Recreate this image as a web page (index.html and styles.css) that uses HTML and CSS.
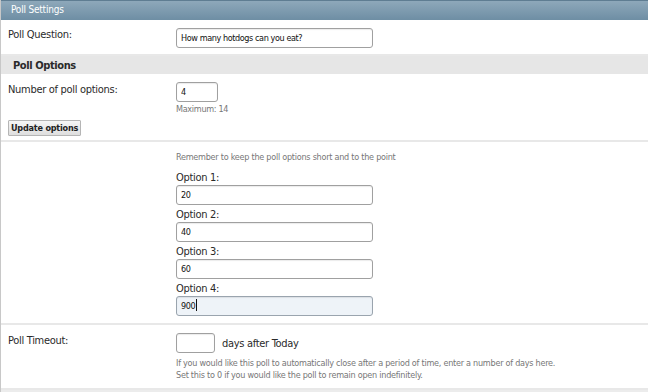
FILE: index.html
```html
<!DOCTYPE html>
<html lang="en">
<head>
    <meta charset="UTF-8">
    <meta name="viewport" content="width=device-width, initial-scale=1.0">
    <title>Poll Settings</title>
    <link rel="stylesheet" href="styles.css">
</head>
<body>
    <div class="panel">
        <div class="panel-head">Poll Settings</div>

        <div class="row row-question">
            <div class="label">Poll Question:</div>
            <div class="value">
                <input type="text" class="field field-wide" value="How many hotdogs can you eat?">
            </div>
        </div>

        <div class="section-head">Poll Options</div>

        <div class="row row-count">
            <div class="row-main">
                <div class="label">Number of poll options:</div>
                <div class="value">
                    <input type="text" class="field field-small" value="4">
                    <div class="hint">Maximum: 14</div>
                </div>
            </div>
            <button class="update-button">Update options</button>
        </div>

        <div class="row row-options">
            <div class="label"></div>
            <div class="value">
                <div class="hint hint-top">Remember to keep the poll options short and to the point</div>
                <div class="option">
                    <div class="option-label">Option 1:</div>
                    <input type="text" class="field field-wide" value="20">
                </div>
                <div class="option">
                    <div class="option-label">Option 2:</div>
                    <input type="text" class="field field-wide" value="40">
                </div>
                <div class="option">
                    <div class="option-label">Option 3:</div>
                    <input type="text" class="field field-wide" value="60">
                </div>
                <div class="option">
                    <div class="option-label">Option 4:</div>
                    <div class="field field-wide field-focus">900<span class="caret"></span></div>
                </div>
            </div>
        </div>

        <div class="row row-timeout">
            <div class="label">Poll Timeout:</div>
            <div class="value">
                <div class="days">
                    <input type="text" class="field field-days" value="">
                    <span class="days-text">days after Today</span>
                </div>
                <div class="hint">If you would like this poll to automatically close after a period of time, enter a number of days here.</div>
                <div class="hint">Set this to 0 if you would like the poll to remain open indefinitely.</div>
            </div>
        </div>
    </div>
</body>
</html>
```

FILE: styles.css
```css
body {
    margin: 0;
    background-color: #ffffff;
    font-family: "DejaVu Sans Condensed", "DejaVu Sans", sans-serif;
    font-stretch: condensed;
    color: #2a2a2a;
}
.panel {
    width: 648px;
    height: 392px;
    border-left: 1px solid #c8c8c8;
    box-sizing: border-box;
    background-color: #ececec;
    overflow: hidden;
}
.panel-head {
    height: 19px;
    border-top: 1px solid #5f7d92;
    background: linear-gradient(#8ea8ba, #6e8ea4);
    color: #ffffff;
    font-size: 10px;
    letter-spacing: -0.2px;
    line-height: 18px;
    padding-left: 10px;
}
.row {
    background-color: #ffffff;
    border-bottom: 2px solid #e8e8e8;
    display: flex;
}
.label {
    width: 168px;
    padding-left: 7px;
    flex-shrink: 0;
    font-size: 11px;
    letter-spacing: -0.3px;
    line-height: 13px;
}
.value {
    flex: 1;
}
.row-question {
    height: 36px;
    padding-top: 8px;
    box-sizing: border-box;
}
.section-head {
    height: 18px;
    background-color: #e6e6e6;
    font-weight: bold;
    font-size: 11px;
    letter-spacing: -0.4px;
    line-height: 19px;
    padding-left: 12px;
}
.row-count {
    flex-direction: column;
    height: 68px;
    padding-top: 8px;
    box-sizing: border-box;
}
.row-main {
    display: flex;
}
.row-main .label {
    padding-top: 1px;
}
.field {
    display: block;
    box-sizing: border-box;
    height: 20px;
    border: 1px solid #a0a0a0;
    border-radius: 3px;
    box-shadow: inset 0 1px 1px rgba(0, 0, 0, 0.08);
    font: inherit;
    font-size: 9px;
    letter-spacing: -0.4px;
    color: #111111;
    padding: 0 4px;
    background-color: #ffffff;
    margin: 0;
    outline: none;
}
.field-wide {
    width: 197px;
}
.field-small {
    width: 42px;
}
.field-days {
    width: 39px;
}
.field-focus {
    background-color: #eef3f8;
    line-height: 18px;
    border-color: #9aa4ae;
}
.caret {
    display: inline-block;
    width: 1px;
    height: 12px;
    margin-left: 1px;
    background-color: #111111;
    vertical-align: -2px;
}
.hint {
    font-size: 9px;
    letter-spacing: -0.25px;
    color: #777777;
    line-height: 12px;
}
.row-count .hint {
    padding-top: 1px;
    letter-spacing: -0.3px;
}
.update-button {
    align-self: flex-start;
    margin: 5px 0 0 7px;
    height: 16px;
    padding: 0 2px;
    font: inherit;
    font-size: 9px;
    letter-spacing: -0.2px;
    font-weight: bold;
    color: #222222;
    background: linear-gradient(#f6f6f6, #dedede);
    border: 1px solid #b5b5b5;
    border-radius: 1px;
}
.row-options {
    height: 183px;
    padding-top: 9px;
    box-sizing: border-box;
}
.hint-top {
    margin-bottom: 5px;
}
.option-label {
    font-size: 11px;
    letter-spacing: -0.3px;
    line-height: 13px;
    padding-top: 3px;
    margin-bottom: 1px;
}
.row-timeout {
    height: 65px;
    padding-top: 8px;
    box-sizing: border-box;
}
.row-timeout .label {
    padding-top: 1px;
}
.days {
    display: flex;
    align-items: center;
    gap: 7px;
    margin-bottom: 4px;
}
.days-text {
    font-size: 11px;
    letter-spacing: -0.3px;
}
```
